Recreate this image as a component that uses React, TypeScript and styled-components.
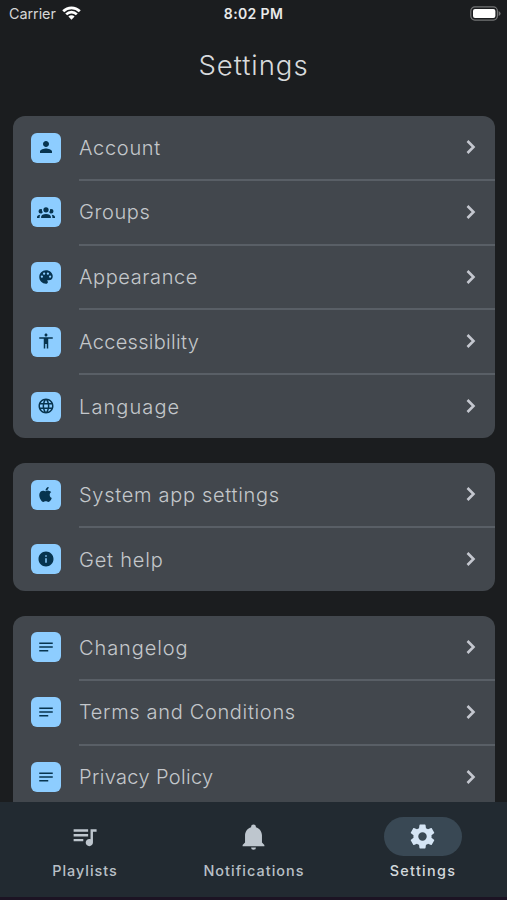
import React from "react";
import styled, { createGlobalStyle } from "styled-components";
import { FaApple } from "react-icons/fa";
import { MdAccessibility, MdInfo, MdLanguage, MdNotes, MdPerson, MdQueueMusic } from "react-icons/md";

const GlobalStyle = createGlobalStyle`
  * { box-sizing: border-box; }
  body { margin: 0; background: #1b1d1f; font-family: Inter, "Liberation Sans", sans-serif; }
`;

const Screen = styled.div`
  height: 900px;
  width: 507px;
  display: flex;
  flex-direction: column;
  overflow: hidden;
  background: #1b1d1f;
  color: #c4c7cb;
`;

const StatusBar = styled.header`
  height: 27px;
  flex: none;
  display: grid;
  grid-template-columns: 1fr auto 1fr;
  align-items: center;
  padding: 0 6px 0 9px;
  color: #e9eaea;
  font-size: 14.4px;
`;

const Carrier = styled.div`
  display: flex;
  align-items: center;
  gap: 6px;
  letter-spacing: -0.05px;
  color: #d5d6d6;

  svg { margin-top: -2px; }
`;

const Clock = styled.div`
  font-weight: 600;
  font-size: 14px;
  letter-spacing: 0.35px;
  margin-right: 3px;
`;

const BatterySlot = styled.div`
  display: flex;
  justify-content: flex-end;
  margin-top: -1px;
`;

const Title = styled.h1`
  flex: none;
  margin: 0;
  height: 89px;
  padding-top: 20px;
  line-height: 36px;
  text-align: center;
  font-size: 27.5px;
  font-weight: 350;
  letter-spacing: 0.95px;
  color: #d8dadc;
`;

const Content = styled.main`
  flex: 1;
  min-height: 0;
  overflow: hidden;
  display: flex;
  flex-direction: column;
  gap: 25px;
  padding: 0 12px 0 13px;
`;

const Card = styled.section`
  flex: none;
  overflow: hidden;
  border-radius: 12px;
  background: #42474d;

  &:last-child { padding-bottom: 24px; }
`;

const Row = styled.div`
  display: flex;
  height: 64.8px;
  padding-left: 18px;

  &:last-child { height: 63px; }
`;

const Tile = styled.div`
  width: 30px;
  height: 30px;
  margin: 16.5px 18px 0 0;
  flex: none;
  display: flex;
  align-items: center;
  justify-content: center;
  border-radius: 6px;
  background: #8dcdff;
  color: #07344f;

  svg { width: 18px; height: 18px; margin: 0 1px 1px 0; }
`;

const RowBody = styled.div`
  flex: 1;
  display: flex;
  align-items: flex-start;
  justify-content: space-between;
  padding-right: 17.5px;
  border-bottom: 2px solid #595f66;

  ${Row}:last-child & { border-bottom: 0; }
`;

const Label = styled.span<{ $tracking: number }>`
  margin-top: 16.6px;
  line-height: 30px;
  font-size: 20px;
  font-weight: 350;
  letter-spacing: ${(p) => p.$tracking}px;
  white-space: nowrap;
`;

const Chevron = styled.svg`
  width: 13px;
  height: 18px;
  margin-top: 22px;
  fill: none;
  stroke: #c4c7cf;
  stroke-width: 2.6;
`;

const NavBar = styled.nav`
  flex: none;
  height: 98px;
  display: grid;
  grid-template-columns: repeat(3, 1fr);
  padding-top: 15px;
  background: #222a31;
  border-bottom: 3px solid #1c1323;
`;

const NavItem = styled.div<{ $active?: boolean }>`
  display: flex;
  flex-direction: column;
  align-items: center;
  color: ${(p) => (p.$active ? "#d5e5f5" : "#bec6ce")};
`;

const Pill = styled.div<{ $active?: boolean }>`
  width: 78px;
  height: 39px;
  display: flex;
  align-items: center;
  justify-content: center;
  border-radius: 20px;
  background: ${(p) => (p.$active ? "#394854" : "transparent")};

  svg { width: 29px; height: 29px; }
`;

const NavLabel = styled.span<{ $tracking: number; $active?: boolean }>`
  margin-top: 5px;
  padding-left: 1px;
  line-height: 20px;
  font-size: 14.4px;
  font-weight: 500;
  color: ${(p) => (p.$active ? "#d3d8dc" : "#b9c0c7")};
  letter-spacing: ${(p) => p.$tracking}px;
`;

const Glyph = ({ d }: { d: string }) => (
  <svg viewBox="0 0 24 24" fill="currentColor" fillRule="evenodd"><path d={d} /></svg>
);

const GROUP = "M12,5.5A3.5,3.5 0 0,1 15.5,9A3.5,3.5 0 0,1 12,12.5A3.5,3.5 0 0,1 8.5,9A3.5,3.5 0 0,1 12,5.5M5,8C5.56,8 6.08,8.15 6.53,8.42C6.38,9.85 6.8,11.27 7.66,12.38C7.16,13.34 6.16,14 5,14A3,3 0 0,1 2,11A3,3 0 0,1 5,8M19,8A3,3 0 0,1 22,11A3,3 0 0,1 19,14C17.84,14 16.84,13.34 16.34,12.38C17.2,11.27 17.62,9.85 17.47,8.42C17.92,8.15 18.44,8 19,8M5.5,18.25C5.5,16.18 8.41,14.5 12,14.5C15.59,14.5 18.5,16.18 18.5,18.25V20H5.5V18.25M0,20V18.5C0,17.11 1.89,15.94 4.45,15.6C3.86,16.28 3.5,17.22 3.5,18.25V20H0M24,20H20.5V18.25C20.5,17.22 20.14,16.28 19.55,15.6C22.11,15.94 24,17.11 24,18.5V20Z";
const PALETTE = "M12,3C17,3 21,6.6 21,11A5.4,5.4 0 0,1 15.6,16.4H14.2C13.9,16.4 13.7,16.6 13.7,16.9L13.9,17.3C14.3,17.8 14.5,18.4 14.5,19C14.5,20.2 13.4,21 12,21C7,21 3,17 3,12S7,3 12,3M6.5,10A1.5,1.5 0 1,0 6.5,13A1.5,1.5 0 1,0 6.5,10M9.5,6A1.5,1.5 0 1,0 9.5,9A1.5,1.5 0 1,0 9.5,6M14.5,6A1.5,1.5 0 1,0 14.5,9A1.5,1.5 0 1,0 14.5,6M17.5,10A1.5,1.5 0 1,0 17.5,13A1.5,1.5 0 1,0 17.5,10Z";
const BELL = "M21,19V20H3V19L5,17V11C5,7.9 7.03,5.17 10,4.29C10,4.19 10,4.1 10,4A2,2 0 0,1 12,2A2,2 0 0,1 14,4C14,4.1 14,4.19 14,4.29C16.97,5.17 19,7.9 19,11V17L21,19M14,21A2,2 0 0,1 12,23A2,2 0 0,1 10,21Z";
const COG = "M12,15.5A3.5,3.5 0 0,1 8.5,12A3.5,3.5 0 0,1 12,8.5A3.5,3.5 0 0,1 15.5,12A3.5,3.5 0 0,1 12,15.5M19.43,12.97C19.47,12.65 19.5,12.33 19.5,12C19.5,11.67 19.47,11.34 19.43,11L21.54,9.37C21.73,9.22 21.78,8.95 21.66,8.73L19.66,5.27C19.54,5.05 19.27,4.96 19.05,5.05L16.56,6.05C16.04,5.66 15.5,5.32 14.87,5.07L14.5,2.42C14.46,2.18 14.25,2 14,2H10C9.75,2 9.54,2.18 9.5,2.42L9.13,5.07C8.5,5.32 7.96,5.66 7.44,6.05L4.95,5.05C4.73,4.96 4.46,5.05 4.34,5.27L2.34,8.73C2.21,8.95 2.27,9.22 2.46,9.37L4.57,11C4.53,11.34 4.5,11.67 4.5,12C4.5,12.33 4.53,12.65 4.57,12.97L2.46,14.63C2.27,14.78 2.21,15.05 2.34,15.27L4.34,18.73C4.46,18.95 4.73,19.03 4.95,18.95L7.44,17.94C7.96,18.34 8.5,18.68 9.13,18.93L9.5,21.58C9.54,21.82 9.75,22 10,22H14C14.25,22 14.46,21.82 14.5,21.58L14.87,18.93C15.5,18.67 16.04,18.34 16.56,17.94L19.05,18.95C19.27,19.03 19.54,18.95 19.66,18.73L21.66,15.27C21.78,15.05 21.73,14.78 21.54,14.63L19.43,12.97Z";

type Item = { label: string; icon: React.ReactNode; tracking: number };

const AppleIcon = styled(FaApple)`
  && { width: 17px; height: 17px; }
`;

const sections: Item[][] = [
  [
    { label: "Account", icon: <MdPerson />, tracking: 0.7 },
    { label: "Groups", icon: <Glyph d={GROUP} />, tracking: 0.6 },
    { label: "Appearance", icon: <Glyph d={PALETTE} />, tracking: 0.6 },
    { label: "Accessibility", icon: <MdAccessibility />, tracking: 0.3 },
    { label: "Language", icon: <MdLanguage />, tracking: 1.1 },
  ],
  [
    { label: "System app settings", icon: <AppleIcon />, tracking: 0.7 },
    { label: "Get help", icon: <MdInfo />, tracking: 0.8 },
  ],
  [
    { label: "Changelog", icon: <MdNotes />, tracking: 0.9 },
    { label: "Terms and Conditions", icon: <MdNotes />, tracking: 0.67 },
    { label: "Privacy Policy", icon: <MdNotes />, tracking: 0.35 },
  ],
];

export default function App() {
  return (
    <Screen>
      <GlobalStyle />
      <StatusBar>
        <Carrier>
          Carrier
          <svg width="19" height="14" viewBox="0 0 19 14" fill="none" stroke="#fff" strokeWidth="2.7">
            <path d="M1.2 5.2a11.8 11.8 0 0 1 16.6 0M4.2 8.4a7.5 7.5 0 0 1 10.6 0" />
            <path d="M9.5 13.7 6.4 10.6a4.4 4.4 0 0 1 6.2 0z" fill="#fff" stroke="none" />
          </svg>
        </Carrier>
        <Clock>8:02 PM</Clock>
        <BatterySlot>
          <svg width="31" height="15" viewBox="0 0 31 15">
            <rect x="0.8" y="0.9" width="26.6" height="13.2" rx="4" fill="none" stroke="#737475" strokeWidth="1.2" />
            <rect x="3" y="3" width="22.4" height="9" rx="2" fill="#fff" />
            <path d="M28.6 5v5q2-1 2-2.5T28.6 5" fill="#737475" />
          </svg>
        </BatterySlot>
      </StatusBar>
      <Title>Settings</Title>
      <Content>
        {sections.map((items, i) => (
          <Card key={i}>
            {items.map((item) => (
              <Row key={item.label}>
                <Tile>{item.icon}</Tile>
                <RowBody>
                  <Label $tracking={item.tracking}>{item.label}</Label>
                  <Chevron viewBox="0 0 13 18"><path d="M2.5 3l6 6-6 6" /></Chevron>
                </RowBody>
              </Row>
            ))}
          </Card>
        ))}
      </Content>
      <NavBar>
        <NavItem>
          <Pill><MdQueueMusic /></Pill>
          <NavLabel $tracking={1}>Playlists</NavLabel>
        </NavItem>
        <NavItem>
          <Pill><Glyph d={BELL} /></Pill>
          <NavLabel $tracking={1.05}>Notifications</NavLabel>
        </NavItem>
        <NavItem $active>
          <Pill $active><Glyph d={COG} /></Pill>
          <NavLabel $tracking={1.3} $active>Settings</NavLabel>
        </NavItem>
      </NavBar>
    </Screen>
  );
}
